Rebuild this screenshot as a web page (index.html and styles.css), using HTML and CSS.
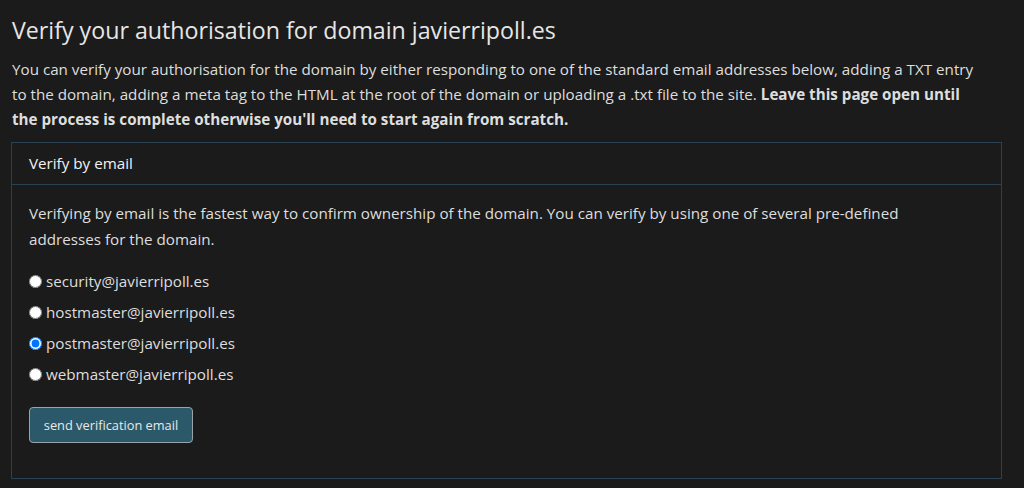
FILE: index.html
```html
<!DOCTYPE html>
<html lang="en">
 <head>
  <meta charset="utf-8">
  <title>Verify domain</title>
  <link rel="stylesheet" href="styles.css">
 </head>
 <body>
  <div class="page">
	<h1 class="title">Verify your authorisation for domain javierripoll.es</h1>
	<p class="intro">You can verify your authorisation for the domain by either responding to one of the standard email addresses below, adding a TXT entry to the domain, adding a meta tag to the HTML at the root of the domain or uploading a .txt file to the site. <b>Leave this page open until the process is complete otherwise you'll need to start again from scratch.</b></p>
	<div class="card">
		<div class="card-head">Verify by email</div>
		<div class="card-body">
			<p class="note">Verifying by email is the fastest way to confirm ownership of the domain. You can verify by using one of several pre-defined addresses for the domain.</p>
			<ul class="opts">
				<li><label><input type="radio" name="addr"> security@javierripoll.es</label></li>
				<li><label><input type="radio" name="addr"> hostmaster@javierripoll.es</label></li>
				<li><label><input type="radio" name="addr" checked> postmaster@javierripoll.es</label></li>
				<li><label><input type="radio" name="addr"> webmaster@javierripoll.es</label></li>
			</ul>
			<button class="btn">send verification email</button>
		</div>
	</div>
  </div>
 </body>
</html>
```
FILE: styles.css
```css
*{margin:0;padding:0;box-sizing:border-box;}
body{
	background:#1b1b1b;
	color:#dedede;
	font-family:"Open Sans","DejaVu Sans",sans-serif;
	font-size:15.2px;
}
.page{
	padding:14px 11px 0 11px;
	width:1024px;
}
.title{
	font-weight:normal;
	font-size:23.2px;
	line-height:32px;
	margin-left:1px;
	color:#e6e6e6;
}
.intro{
	line-height:25px;
	margin:11px 32px 10px 1px;
}
.intro b{font-weight:bold;}
.card{
	border:1px solid #2a4250;
	width:991px;
	height:337px;
	margin-top:10px;
}
.card-head{
	border-bottom:1px solid #2a4250;
	height:42px;
	line-height:41px;
	padding-left:17px;
	color:#f2f2f2;
}
.card-body{
	padding:15px 60px 15px 17px;
}
.note{
	line-height:26px;
}
.opts{
	list-style:none;
	margin-top:18px;
}
.opts li{
	height:31px;
	line-height:22px;
}
.opts label{
	display:flex;
	align-items:center;
	gap:4px;
}
.opts input{
	width:13px;
	height:13px;
	margin:0;
}
.btn{
	margin-top:13px;
	background:#2c5969;
	color:#e8e8e8;
	border:1px solid #9aa4a8;
	border-radius:4px;
	font-family:"Open Sans","DejaVu Sans",sans-serif;
	font-size:12.8px;
	height:36px;
	width:164px;
}
```
